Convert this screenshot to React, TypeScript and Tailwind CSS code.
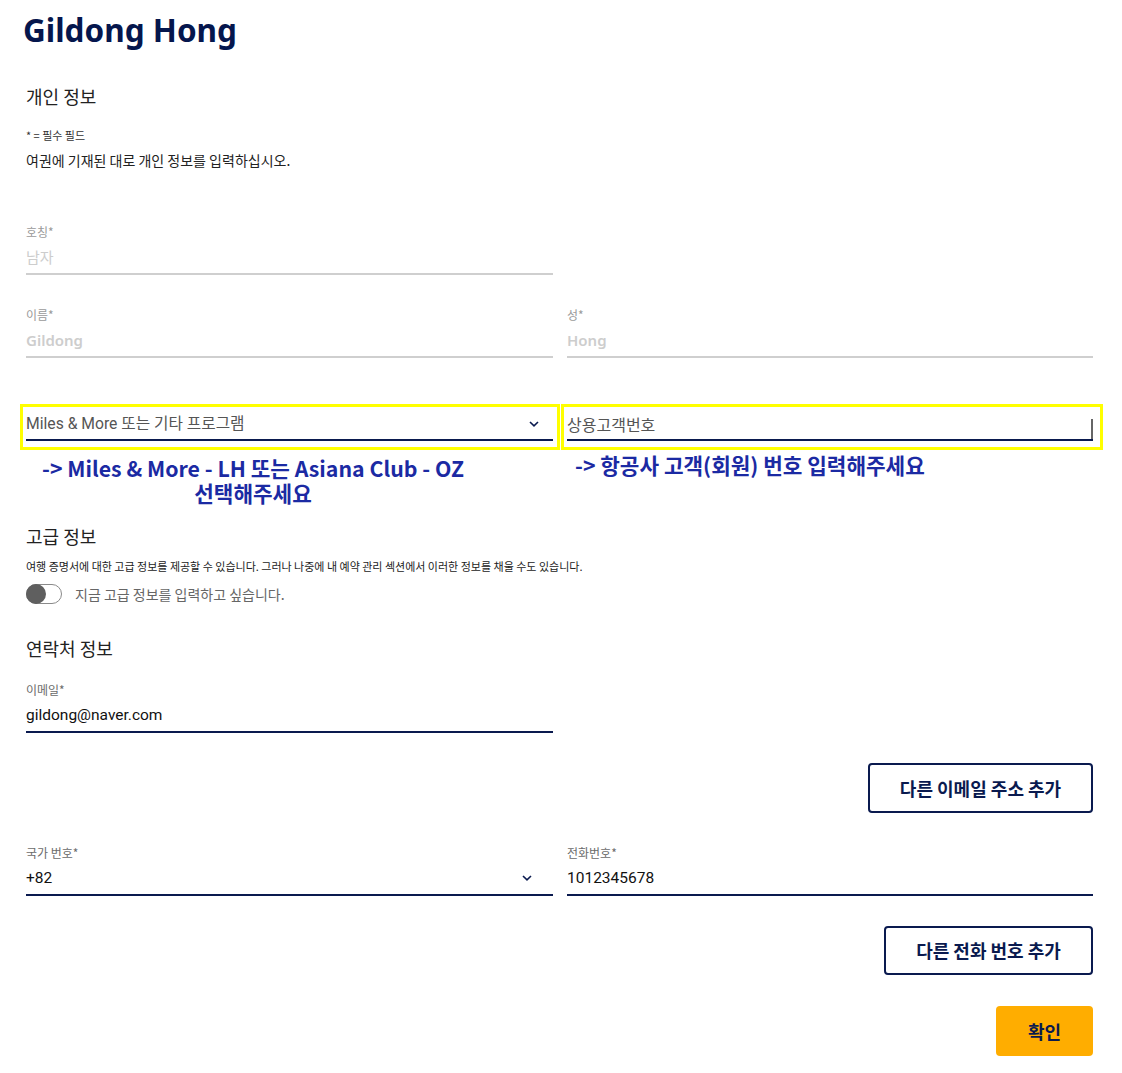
import React from "react";

const NAVY = "#0a1a4f";

const KR = "font-['Noto_Sans_CJK_KR',sans-serif]";
const RB = "font-['Roboto','Noto_Sans_CJK_KR',sans-serif]";

function Chevron({ className = "" }: { className?: string }) {
  return (
    <svg width="10" height="6" viewBox="0 0 10 6" className={className} aria-hidden>
      <polyline points="1,1 5,4.8 9,1" fill="none" stroke={NAVY} strokeWidth="1.6" />
    </svg>
  );
}

type FieldProps = {
  label: string;
  value: string;
  disabled?: boolean;
  latin?: boolean;
  select?: boolean;
};

function Field({ label, value, disabled, latin, select }: FieldProps) {
  return (
    <div className="flex flex-col">
      <div
        className={`${KR} text-[12px] leading-[16px] ${disabled ? "text-[#9a9a9a]" : "text-[#6b6b6b]"}`}
      >
        {label}
      </div>
      <div
        className={`mt-[6px] flex items-center justify-between pb-[5px] border-b-2 ${
          disabled ? "border-[#cfcfcf]" : "border-[#0a1a4f]"
        }`}
      >
        <span
          className={`leading-[22px] ${
            disabled
              ? `text-[15px] text-[#cdcdcd] ${latin ? "font-['Noto_Sans','Noto_Sans_CJK_KR',sans-serif] font-semibold" : KR}`
              : `text-[15.5px] ${RB} text-[#111111]`
          }`}
        >
          {value}
        </span>
        {select && <Chevron className="mr-[21px]" />}
      </div>
    </div>
  );
}

export default function App() {
  return (
    <div className="min-h-[1073px] w-[1122px] bg-white">
      <div className="pl-[26px] w-[1093px] pb-[17px]">
        <h1
          className="ml-[-3px] pt-[10px] text-[31.5px] leading-[40px] font-bold text-[#05164d] font-['Noto_Sans',sans-serif]"
        >
          Gildong Hong
        </h1>

        {/* personal details */}
        <h2 className={`${KR} mt-[34px] text-[18px] leading-[24px] text-[#222222] font-normal`}>
          개인 정보
        </h2>
        <p className={`${KR} mt-[19px] text-[11px] leading-[16px] text-[#333333]`}>* = 필수 필드</p>
        <p className={`${KR} mt-[7px] text-[14px] leading-[20px] text-[#222222]`}>
          여권에 기재된 대로 개인 정보를 입력하십시오.
        </p>

        <div className="mt-[54px] grid grid-cols-[527px_526px] gap-x-[14px]">
          <Field label="호칭*" value="남자" disabled />
        </div>

        <div className="mt-[32px] grid grid-cols-[527px_526px] gap-x-[14px]">
          <Field label="이름*" value="Gildong" disabled latin />
          <Field label="성*" value="Hong" disabled latin />
        </div>

        {/* frequent flyer programme, outlined in yellow */}
        <div className="mt-[46px] ml-[-6px] flex">
          <div className="w-[540px] shrink-0 border-[3px] border-[#ffff00] pl-[3px] pr-[4px] pt-[6px] pb-[6px]">
            <div className="flex items-center justify-between border-b-2 border-[#0a1a4f] pb-[4px]">
              <span className={`${RB} text-[15.7px] leading-[22px] text-[#555555]`}>
                Miles &amp; More 또는 기타 프로그램
              </span>
              <Chevron className="mr-[14px]" />
            </div>
          </div>
          <div className="w-[542px] shrink-0 ml-[1px] border-[3px] border-[#ffff00] pl-[3px] pr-[7px] pt-[6px] pb-[6px]">
            <div className="flex items-end justify-between border-b-2 border-[#0a1a4f]">
              <span className={`${KR} text-[16px] leading-[22px] text-[#555555] pb-[4px]`}>
                상용고객번호
              </span>
              <span className="w-[2px] h-[20px] bg-[#666666]" />
            </div>
          </div>
        </div>

        <div className="flex">
          <p
            className={`${KR} ml-[12px] mt-[5px] w-[430px] shrink-0 text-center text-[21.3px] leading-[25px] font-bold text-[#1b2aa3] whitespace-nowrap`}
          >
            -&gt; Miles &amp; More - LH 또는 Asiana Club - OZ
            <br />
            선택해주세요
          </p>
          <p
            className={`${KR} ml-[107px] mt-[2px] text-[21.3px] leading-[25px] font-bold text-[#1b2aa3] whitespace-nowrap`}
          >
            -&gt; 항공사 고객(회원) 번호 입력해주세요
          </p>
        </div>

        {/* advanced details */}
        <h2 className={`${KR} mt-[19px] text-[18px] leading-[24px] text-[#222222] font-normal`}>
          고급 정보
        </h2>
        <p className={`${KR} mt-[10px] text-[11px] leading-[16px] text-[#222222] whitespace-nowrap`}>
          여행 증명서에 대한 고급 정보를 제공할 수 있습니다. 그러나 나중에 내 예약 관리 섹션에서 이러한 정보를 채울 수도 있습니다.
        </p>
        <div className="mt-[10px] flex items-center">
          <div className="relative h-[20px] w-[36px] rounded-full border border-[#8a8a8a] bg-white">
            <div className="absolute left-[-1px] top-[-1px] h-[20px] w-[20px] rounded-full bg-[#5f5f5f]" />
          </div>
          <span className={`${KR} ml-[13px] text-[14px] leading-[20px] text-[#666666]`}>
            지금 고급 정보를 입력하고 싶습니다.
          </span>
        </div>

        {/* contact details */}
        <h2 className={`${KR} mt-[32px] text-[18px] leading-[24px] text-[#222222] font-normal`}>
          연락처 정보
        </h2>
        <div className="mt-[22px] grid grid-cols-[527px_526px] gap-x-[14px]">
          <Field label="이메일*" value="gildong@naver.com" />
        </div>

        <div className="mt-[30px] flex justify-end">
          <button
            className={`${KR} h-[50px] w-[225px] rounded-[4px] border-2 border-[#0a1a4f] bg-white text-[18px] font-bold text-[#0a1a4f]`}
          >
            다른 이메일 주소 추가
          </button>
        </div>

        <div className="mt-[32px] grid grid-cols-[527px_526px] gap-x-[14px]">
          <Field label="국가 번호*" value="+82" select />
          <Field label="전화번호*" value="1012345678" />
        </div>

        <div className="mt-[30px] flex justify-end">
          <button
            className={`${KR} h-[49px] w-[209px] rounded-[4px] border-2 border-[#0a1a4f] bg-white text-[18px] font-bold text-[#0a1a4f]`}
          >
            다른 전화 번호 추가
          </button>
        </div>

        <div className="mt-[31px] flex justify-end">
          <button
            className={`${KR} h-[50px] w-[97px] rounded-[4px] bg-[#ffad00] text-[18px] font-bold text-[#0a1a4f]`}
          >
            확인
          </button>
        </div>
      </div>
    </div>
  );
}
